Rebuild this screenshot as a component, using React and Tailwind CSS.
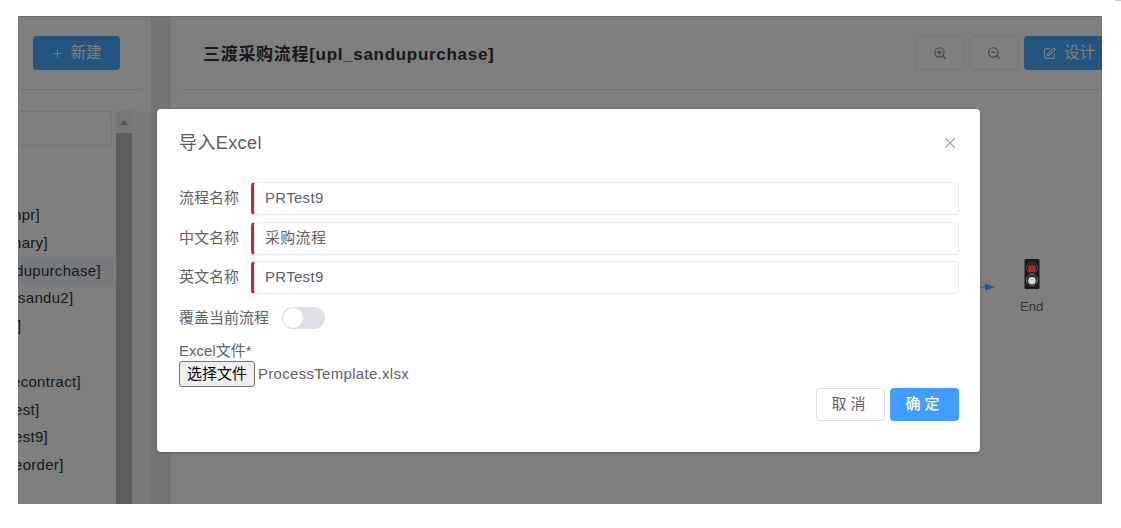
import { Plus, X, ZoomIn, ZoomOut, SquarePen } from 'lucide-react'

const fontCn = 'font-["Liberation_Sans","Noto_Sans_CJK_SC",sans-serif]'

// tail ends of the process names, the list is cut off on the left
const listRows = [
  { text: 'npr]', pad: '-ml-[5px]' },
  { text: 'nary]', pad: '-ml-[5px]' },
  { text: 'dupurchase]', pad: '-ml-[3px]', active: true },
  { text: 'sandu2]', pad: 'ml-0' },
  { text: ']', pad: '-ml-[1px]' },
  { text: '', pad: 'ml-0' },
  { text: 'econtract]', pad: '-ml-[6px]' },
  { text: 'est]', pad: '-ml-[4px]' },
  { text: 'est9]', pad: '-ml-[4px]' },
  { text: 'eorder]', pad: '-ml-[4px]' },
]

function Sidebar() {
  return (
    <div className="flex w-[133px] shrink-0 flex-col bg-white">
      <div className="mr-[10px] flex h-[74px] shrink-0 items-start border-b border-[#e6e6e6] pt-5 pl-[15px]">
        <button className="flex h-[34px] w-[87px] items-center justify-center gap-1.5 rounded bg-[#46abff] text-[15.5px] text-white">
          <Plus size={13} strokeWidth={1.5} />
          新建
        </button>
      </div>
      <div className="flex min-h-0 flex-1 pt-[21px]">
        <div className="w-[98px] shrink-0 overflow-hidden">
          <div className="h-[35px] w-[94px] rounded-r border border-l-0 border-[#eaeaea]" />
          <div className="mt-[55px] flex w-[95px] flex-col text-[15px] tracking-[0.3px] text-[#303133]">
            {listRows.map((row, i) => (
              <div key={i} className={`h-[27.8px] leading-[27.8px] ${row.active ? 'bg-[#ecf5ff]' : ''}`}>
                <span className={`block whitespace-nowrap ${row.pad}`}>{row.text}</span>
              </div>
            ))}
          </div>
        </div>
        <div className="flex w-4 shrink-0 flex-col bg-[#f1f1f1]">
          <div className="flex h-[22px] shrink-0 items-center justify-center">
            <div className="h-0 w-0 border-x-[4.5px] border-b-[5px] border-x-transparent border-b-[#aaaaaa]" />
          </div>
          <div className="flex-1 bg-[#c1c1c1]" />
        </div>
        <div className="w-[19px] shrink-0 bg-[#f5f5f5]" />
      </div>
    </div>
  )
}

function Toolbar() {
  return (
    <div className="ml-[10px] flex h-[74px] shrink-0 items-start justify-between border-b border-[#e6e6e6] pt-5">
      <h1 className="mt-[6px] pl-[22px] text-[17px] font-bold tracking-[0.7px] text-[#303133]">
        三渡采购流程[upl_sandupurchase]
      </h1>
      <div className="flex gap-[5px]">
        <button className="flex h-[34px] w-[49px] items-center justify-center rounded border border-[#e8e8e8] text-[#8a8c90]">
          <ZoomIn size={14} />
        </button>
        <button className="flex h-[34px] w-[50px] items-center justify-center rounded border border-[#e8e8e8] text-[#8a8c90]">
          <ZoomOut size={14} />
        </button>
        <button className="flex h-[34px] w-[78px] items-center gap-2 rounded-l bg-[#46abff] pl-[19px] text-[15.5px] whitespace-nowrap text-white">
          <SquarePen size={13} />
          设计
        </button>
      </div>
    </div>
  )
}

// sits on the overlay, so its colours are already the dimmed ones
function EndNode() {
  return (
    <div className="absolute top-[243px] left-[962px] flex items-start">
      <svg width="16" height="8" viewBox="0 0 16 8" className="mt-6">
        <path d="M0 4h8" stroke="#24588f" strokeWidth="1" />
        <path d="M5 0.5 15 4 5 7.5z" fill="#24588f" />
      </svg>
      <div className="ml-[24px] flex flex-col items-center">
        <svg width="16" height="31" viewBox="0 0 16 31">
          <rect x="0.5" width="15" height="30" rx="1" fill="#17191c" />
          <circle cx="8" cy="9" r="5.5" fill="none" stroke="#555555" strokeWidth="0.8" />
          <circle cx="8" cy="9.5" r="4" fill="#9c2a2a" />
          <circle cx="8" cy="21" r="5.5" fill="none" stroke="#8a8a8a" strokeWidth="0.8" />
          <circle cx="8" cy="21.5" r="3.8" fill="#d8d8d8" />
        </svg>
        <span className="mt-[9px] text-[13px] leading-4 text-[#333]">End</span>
      </div>
    </div>
  )
}

function Field({ label, value }) {
  return (
    <div className="flex items-center">
      <label className="w-[72px] shrink-0 text-[15px] text-[#606266]">{label}</label>
      <div className="flex h-[33px] flex-1 items-center rounded border border-l-[3px] border-[#e9ebf2] border-l-[#d81e35] pl-[11px] text-[15px] tracking-[0.3px] text-[#606266]">
        {value}
      </div>
    </div>
  )
}

function ImportDialog() {
  return (
    <div className="absolute top-[93px] left-[139px] flex h-[343px] w-[823px] flex-col rounded-sm bg-white pr-[21px] pl-[22px] shadow-[0_1px_3px_rgba(0,0,0,0.3)]">
      <div className="flex h-[67px] shrink-0 items-center justify-between">
        <h2 className="text-lg tracking-[0.4px] text-[#5c5c5c]">导入Excel</h2>
        <X size={18} strokeWidth={1.5} className="text-[#a0a3a8]" />
      </div>
      <div className="mt-[6px] flex flex-col gap-[6.5px]">
        <Field label="流程名称" value="PRTest9" />
        <Field label="中文名称" value="采购流程" />
        <Field label="英文名称" value="PRTest9" />
      </div>
      <div className="mt-[13px] flex h-[22px] items-center">
        <span className="w-[103px] shrink-0 text-[15px] text-[#606266]">覆盖当前流程</span>
        <div className="flex h-[22px] w-[43px] items-center rounded-full bg-[#dcdfe6] pl-[1px]">
          <div className="h-5 w-5 rounded-full bg-white" />
        </div>
      </div>
      <div className="mt-[13px] flex items-start justify-between">
        <div className="flex flex-col">
          <span className="h-[19px] text-[15px] leading-[17px] text-[#606266]">Excel文件*</span>
          <div className="flex items-center gap-[3px]">
            <button className="flex h-[26px] w-[76px] items-center justify-center rounded-[3px] border border-[#767676] bg-[#efefef] text-[15px] text-black">
              选择文件
            </button>
            <span className="text-[15px] tracking-[0.3px] text-[#606266]">ProcessTemplate.xlsx</span>
          </div>
        </div>
        <div className="mt-[46px] flex gap-[5px]">
          <button className="h-[33px] w-[69px] rounded border border-[#dcdfe6] bg-white text-[15px] tracking-[4px] text-[#606266]">
            取消
          </button>
          <button className="h-[33px] w-[69px] rounded bg-[#409eff] text-[15px] font-medium tracking-[4px] text-white">
            确定
          </button>
        </div>
      </div>
    </div>
  )
}

export default function App() {
  return (
    <div className={`relative h-[528px] w-[1121px] bg-white pt-4 pl-[18px] ${fontCn}`}>
      {/* stray sliver in the corner of the capture */}
      <div className="absolute top-0 right-0 h-px w-[6px] bg-[#c8c8c8]" />
      <div className="relative flex h-[488px] w-[1084px] overflow-hidden bg-white">
        <Sidebar />
        <div className="w-5 shrink-0 bg-[#e9e9e9]" />
        <div className="flex min-w-0 flex-1 flex-col rounded-tl bg-white">
          <Toolbar />
        </div>
        <div className="absolute inset-0 flex bg-black/50 shadow-[inset_0_1px_0_#6b6b6b]">
          <EndNode />
          <ImportDialog />
        </div>
      </div>
    </div>
  )
}
